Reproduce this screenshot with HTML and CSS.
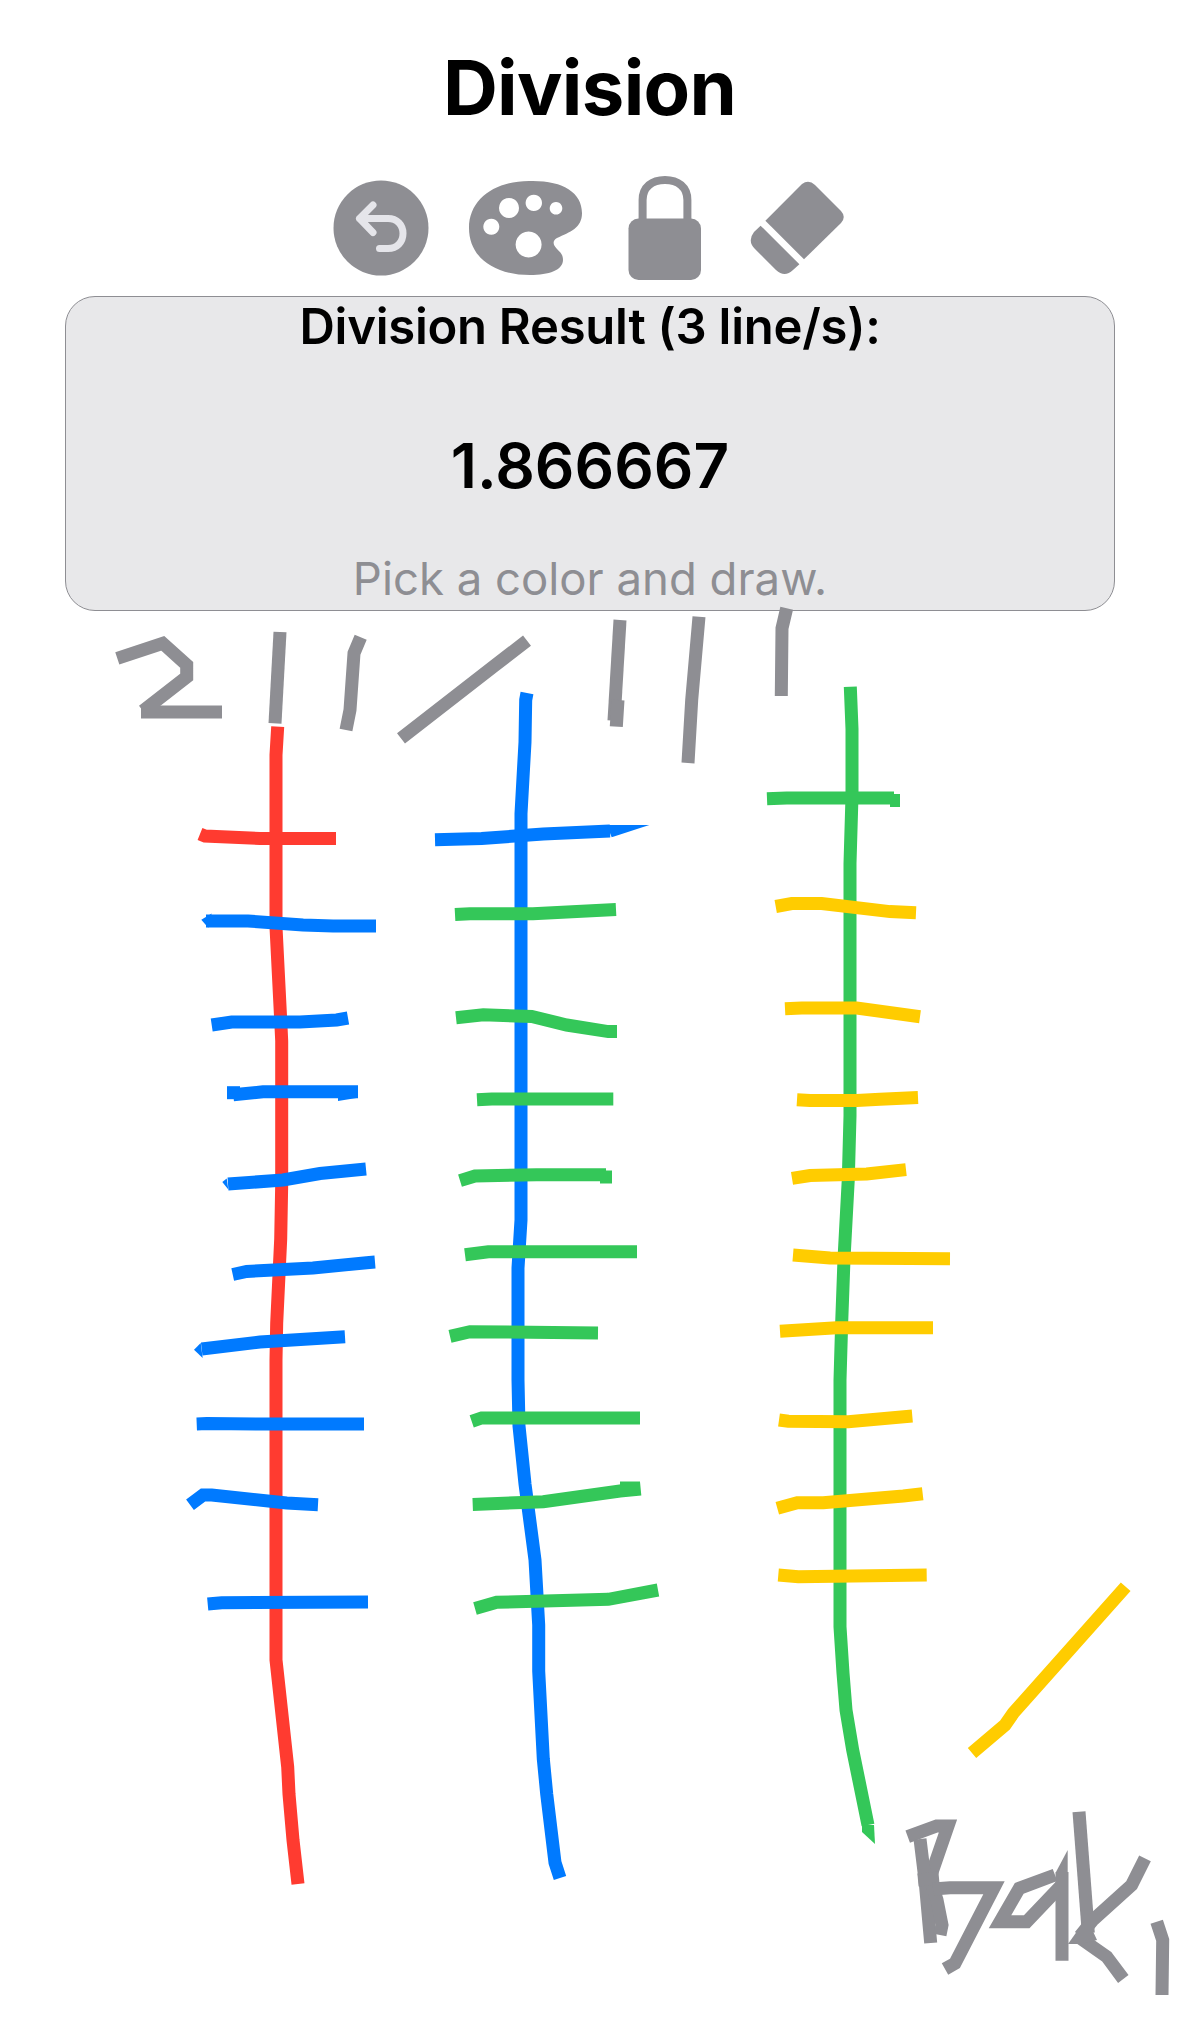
FILE: index.html
```html
<!DOCTYPE html>
<html lang="en">
<head>
<meta charset="utf-8">
<title>Division</title>
<link rel="stylesheet" href="styles.css">
</head>
<body>
<main class="page">
  <h1 class="title">Division</h1>
  <div class="toolbar">
    <svg class="tool tool-undo" viewBox="333 180 96 96" width="96" height="96" aria-label="Undo">
      <circle class="disc" cx="381" cy="228" r="47.5"/>
      <path class="undo-arrow" d="M373 205 L359.5 218.5 L373 232.5 M359.5 218.5 H388 C397 218.5 403 225 403 233.5 C403 242 397 248.5 388 248.5 H379.5"/>
    </svg>
    <svg class="tool tool-palette" viewBox="469 180 113 96" width="113" height="96" aria-label="Colors">
      <path class="solid" fill-rule="evenodd" d="M529 181 C562 180 582 192 582 213 C582 228 570 232 557 238 C552 241 553 245 557 249 C561 253 563 255 563 260 C563 270 549 275 530 275 C495 275 469 258 469 228 C469 199 495 181 529 181 Z M509 198 a10 10 0 1 0 .01 0 Z M533.8 194.7 a8.2 8.2 0 1 0 .01 0 Z M556 202 a6.3 6.3 0 1 0 .01 0 Z M491.3 218.7 a8 8 0 1 0 .01 0 Z M528.6 231.5 a13 13 0 1 0 .01 0 Z"/>
    </svg>
    <svg class="tool tool-lock" viewBox="628 176 73 104" width="73" height="104" aria-label="Lock">
      <path class="shackle" d="M642.6 222 V200 C642.6 187 652 180 665 180 C678 180 687.4 187 687.4 200 V222"/>
      <rect class="solid" x="628.5" y="218.5" width="72.5" height="61.5" rx="10"/>
    </svg>
    <svg class="tool tool-eraser" viewBox="750 181 94 94" width="94" height="94" aria-label="Eraser">
      <path class="solid" d="M765.4 220.7 L802 184 Q808.7 179 815 185 L841 211 Q846.5 217 841 223 L804 259.3 Z"/>
      <path class="solid" d="M760.6 225.7 L799.4 264.3 L793 270 Q784.6 278 776 270 L755 249 Q747 241 754 232 Z"/>
    </svg>
  </div>
  <section class="result">
    <p class="result-label">Division Result (3 line/s):</p>
    <p class="result-value">1.866667</p>
    <p class="result-hint">Pick a color and draw.</p>
  </section>
  <svg class="canvas" viewBox="0 0 1179 2021" width="1179" height="2021" aria-hidden="true">
    <g class="ink ink-gray">
      <polyline points="117.3,658.3 162.7,643.3 186.7,665 186.7,677 143,711"/>
      <polyline points="141,712 222,712"/>
      <polyline points="280,632 275,723.3"/>
      <polyline points="360.7,637.3 354,653.3 350,710 346,730"/>
      <polyline points="527,640.7 493.3,666.7 401,738.3"/>
      <polyline points="620,620 614,720.7"/>
      <polyline points="618,700 616.3,726.7"/>
      <polyline points="699,616.7 691.7,700 688,763"/>
      <polyline points="786.7,608.3 782,628.3 781.3,696"/>
      <polyline points="907.7,1836.7 936.7,1826 948,1826 930,1878"/>
      <polyline points="920,1839 925,1880 930.7,1943"/>
      <polyline points="930,1878 937,1900 942,1925 940,1935"/>
      <polyline points="918,1880 939,1878"/>
      <polyline points="933,1889 950,1887.7 994,1887.7 955,1963.3 945,1969"/>
      <polyline points="1055,1875 1019.3,1888.3 1000,1921.7 1026.7,1921.7 1061.7,1885"/>
      <polyline points="1062,1960.7 1062,1872"/>
      <polyline points="1079,1811.7 1088.3,1933"/>
      <polyline points="1145,1858.3 1131.7,1885 1093,1920 1080,1936"/>
      <polyline points="1080,1938 1106.7,1956.7 1123.3,1979"/>
      <polyline points="1156.7,1921.7 1162.7,1940 1162,1995"/>
      <polygon class="fill" points="1067.7,1850 1056,1872 1067.7,1872"/>
      <polygon class="fill" points="1068,1944 1082,1944 1097,1940 1090,1925 1085,1920"/>
    </g>
    <g class="ink ink-red">
      <polyline points="277.7,726.7 276,755 276,927 280.7,1020 281.7,1041 281.7,1184 280.7,1239 276.7,1323 276,1360 276,1660 287.7,1767 289,1794 293,1840 298,1884"/>
      <polyline points="200,834 205,836 260,838.5 336,838.5"/>
    </g>
    <g class="ink ink-blue">
      <polyline points="527,693 525.7,700 525,742 521,813.6 521,1220 518,1268 518,1380 519,1426 525,1484 535,1560 538.7,1625 538.7,1671 543.3,1759 546.7,1794 555,1862.6 560,1878"/>
      <polyline points="435,839.7 481.7,838.5 543.3,834 610,831"/>
      <polygon class="fill" points="606.7,825 649.3,825 611.7,837.2"/>
      <polyline points="206,921 248,921 303,925 333,926 376,926"/>
      <polygon class="fill" points="201.3,919.7 211.7,913.4 208.3,927.7"/>
      <polyline points="211.7,1025 231.7,1022 300,1022 336.7,1020 348,1018"/>
      <polyline points="233.3,1094.8 263,1091.8 358,1091.8"/>
      <polyline points="227,1092.7 240,1092.7"/>
      <polygon class="fill" points="338,1097 358,1094 358,1097.7 338,1101"/>
      <polyline points="228,1184 283,1180 320,1173.5 366,1169"/>
      <polygon class="fill" points="222.3,1182 226.7,1178.5 228.3,1189.5"/>
      <polyline points="232.7,1274.5 246.7,1271.5 313,1268 366.7,1262.7 375,1262"/>
      <polyline points="201.7,1349 260,1342 345,1336.7"/>
      <polygon class="fill" points="194,1349.7 200.7,1343 202.7,1358"/>
      <polyline points="196.7,1424 206.7,1423.6 260,1424 364,1424"/>
      <polyline points="190,1504.7 203,1495 211.7,1495 286.7,1503 318,1504.7"/>
      <polyline points="207.7,1604 221.7,1602.7 368,1602"/>
    </g>
    <g class="ink ink-green">
      <polyline points="850.3,686.8 852,729 852,796 850,863.6 850,1116 848.3,1179 844,1259 841.7,1322 840,1380 840,1626.7 843,1673 846,1710 852.7,1750 868,1825"/>
      <polygon class="fill" points="862,1825 874,1825 875,1844 862,1832"/>
      <polyline points="767,798.8 786.7,798 894,798"/>
      <polyline points="890,800.5 900,800.5"/>
      <polyline points="455,914.6 470,913.8 533,913.8 616,909.6"/>
      <polyline points="456,1017.8 483.3,1014.8 531.7,1016.5 566.7,1025 608.3,1031.6 617,1031.6"/>
      <polyline points="477,1099.8 491.7,1099 613.3,1099"/>
      <polyline points="460,1180.6 475,1176 536.7,1174.7 606,1174.7"/>
      <polyline points="600,1177 612,1177"/>
      <polyline points="465,1254.7 488.3,1251.7 637,1251.7"/>
      <polyline points="450,1336.4 470,1331.7 598,1333"/>
      <polyline points="471.7,1421.3 481.7,1417.9 640,1418"/>
      <polyline points="472.7,1504.4 543.3,1501.7 620,1491 640.7,1489"/>
      <polyline points="620,1488 640,1488"/>
      <polyline points="475,1608.5 496.7,1602.3 608.3,1599.3 658,1590"/>
    </g>
    <g class="ink ink-yellow">
      <polyline points="775.7,906.5 791.7,903.6 821.7,903.6 890,911.6 916,912.8"/>
      <polyline points="785,1008.8 801.7,1008 856.7,1008 920,1016.8"/>
      <polyline points="797,1099.7 810,1100.5 856.7,1100.5 880,1099.3 918,1097.6"/>
      <polyline points="792,1178.4 810,1175.5 866.7,1174 906,1169.6"/>
      <polyline points="793,1255 830,1258 950,1258.8"/>
      <polyline points="780,1331.3 836.7,1327.7 933,1327.7"/>
      <polyline points="779,1420 788.3,1421.3 848.3,1421.7 912.3,1416"/>
      <polyline points="777.3,1508.3 797.3,1502.7 823.3,1502.7 903.3,1496 922.7,1493.7"/>
      <polyline points="778.3,1575 798.3,1576.7 853,1576 926.7,1575"/>
      <polyline points="1125.7,1586.7 1013.3,1713 1005,1725 972,1753"/>
    </g>
  </svg>
</main>
</body>
</html>
```
FILE: styles.css
```css
* {
  box-sizing: border-box;
}

html,
body {
  margin: 0;
  padding: 0;
  background: #ffffff;
}

.page {
  position: relative;
  width: 1179px;
  height: 2021px;
  overflow: hidden;
  font-family: Inter, "Liberation Sans", sans-serif;
  color: #000000;
}

.title {
  margin: 37px 0 39px;
  font-size: 76px;
  line-height: 100px;
  font-weight: 700;
  letter-spacing: -0.7px;
  text-align: center;
}

.toolbar {
  display: flex;
  justify-content: center;
  align-items: center;
  height: 104px;
  padding-right: 2px;
}

.tool {
  display: block;
  flex: none;
}

.tool-palette {
  margin-left: 40px;
}

.tool-lock {
  margin-left: 46px;
}

.tool-eraser {
  margin-left: 49px;
}

.disc,
.solid {
  fill: #8e8e93;
}

.tool-undo {
  filter: blur(0.6px);
}

.undo-arrow {
  fill: none;
  stroke: #e5e5ea;
  stroke-width: 7;
  stroke-linecap: round;
  stroke-linejoin: round;
}

.shackle {
  fill: none;
  stroke: #8e8e93;
  stroke-width: 8;
}

.result {
  width: 1050px;
  height: 315px;
  margin: 16px 0 0 65px;
  border: 1.5px solid #8e8e93;
  border-radius: 30px;
  background: #e8e8ea;
  text-align: center;
}

.result p {
  margin: 0;
}

.result .result-label {
  font-size: 49px;
  line-height: 60px;
  font-weight: 600;
  letter-spacing: -0.25px;
}

.result .result-value {
  margin-top: 74px;
  font-size: 62px;
  line-height: 70px;
  font-weight: 600;
}

.result .result-hint {
  margin-top: 48px;
  font-size: 45.5px;
  line-height: 60px;
  font-weight: 400;
  color: #8e8e93;
}

.canvas {
  position: absolute;
  top: 0;
  left: 0;
  pointer-events: none;
}

.ink polyline {
  fill: none;
  stroke-width: 13;
  stroke-linejoin: miter;
  stroke-miterlimit: 10;
  stroke-linecap: butt;
}

.ink-gray polyline {
  stroke: #8e8e93;
}

.ink-red polyline {
  stroke: #ff3b30;
}

.ink-blue polyline {
  stroke: #007aff;
}

.ink-green polyline {
  stroke: #34c759;
}

.ink-yellow polyline {
  stroke: #ffcc00;
}

.ink-gray .fill {
  fill: #8e8e93;
}

.ink-blue .fill {
  fill: #007aff;
}

.ink-green .fill {
  fill: #34c759;
}
```
